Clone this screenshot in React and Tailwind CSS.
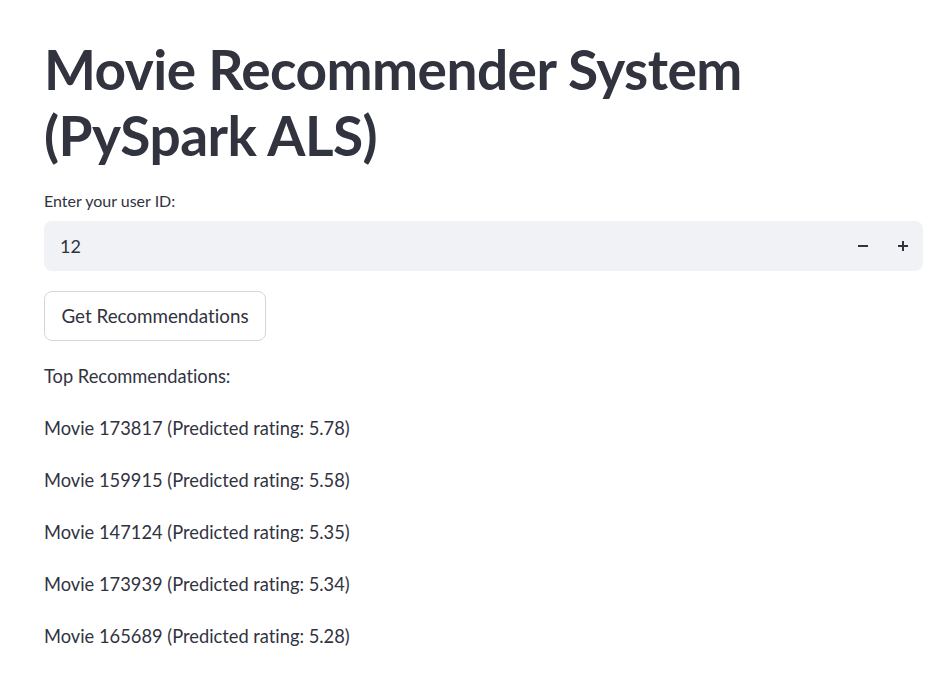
import React from "react";

const movies = [
  ["173817", "5.78"],
  ["159915", "5.58"],
  ["147124", "5.35"],
  ["173939", "5.34"],
  ["165689", "5.28"],
];

export default function App() {
  return (
    <div
      className="min-h-[696px] w-full bg-white text-[#31333F] [font-variant-ligatures:none]"
      style={{ fontFamily: "Lato, 'Noto Sans', sans-serif" }}
    >
      <div className="flex flex-col pl-[44px] pr-[25px] pt-[36px]">
        <h1 className="text-[55px] font-bold leading-[66px] tracking-[-0.55px] text-[#31333F]">
          Movie Recommender System
          <br />
          (PySpark ALS)
        </h1>
        <label className="mt-[23px] text-[16px] leading-[20px]">Enter your user ID:</label>
        <div className="mt-[10px] flex h-[50px] items-center rounded-[8px] bg-[#F0F2F6]">
          <span className="flex-1 pl-[16px] text-[18px]">12</span>
          <div className="flex items-center">
            <button className="flex h-[50px] w-[40px] items-center justify-center">
              <span className="block h-[2.5px] w-[10px] bg-[#31333F]" />
            </button>
            <button className="relative flex h-[50px] w-[40px] items-center justify-center">
              <span className="block h-[2.5px] w-[10px] bg-[#31333F]" />
              <span className="absolute block h-[10px] w-[2.5px] bg-[#31333F]" />
            </button>
          </div>
        </div>
        <div className="mt-[20px]">
          <button className="h-[50px] rounded-[8px] border border-[#D6D6D9] bg-white px-[16.5px] text-[18.8px] text-[#31333F]">
            Get Recommendations
          </button>
        </div>
        <p className="mt-[22px] text-[18.3px] leading-[26px]">Top Recommendations:</p>
        {movies.map(([id, r]) => (
          <p key={id} className="mt-[26px] text-[18.3px] leading-[26px]">
            Movie {id} (Predicted rating: {r})
          </p>
        ))}
      </div>
    </div>
  );
}
